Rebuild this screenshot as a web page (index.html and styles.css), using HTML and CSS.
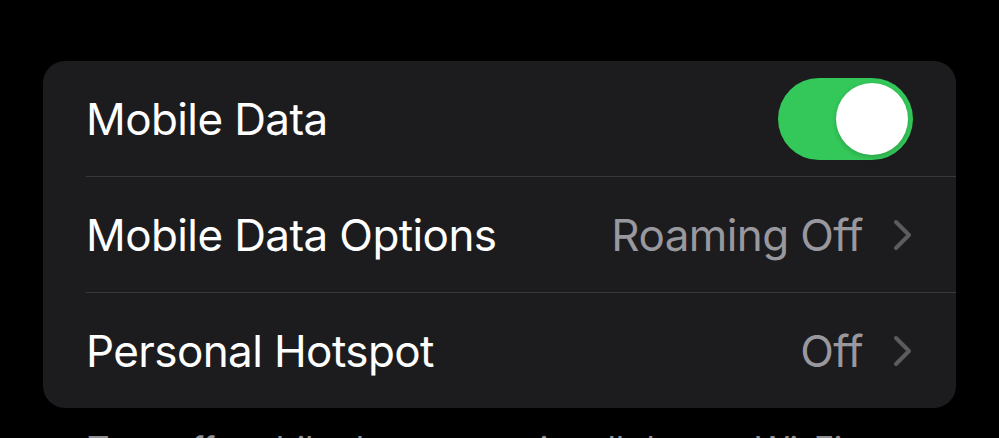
FILE: index.html
```html
<!DOCTYPE html>
<html lang="en">
<head>
<meta charset="utf-8">
<title>Mobile Data</title>
<link rel="stylesheet" href="styles.css">
</head>
<body>
<main class="page">
  <section class="card">
    <div class="row">
      <span class="label">Mobile Data</span>
      <span class="toggle on"><span class="knob"></span></span>
    </div>
    <div class="sep"></div>
    <div class="row">
      <span class="label">Mobile Data Options</span>
      <span class="detail">
        <span class="value">Roaming Off</span>
        <svg class="chev" width="19" height="32" viewBox="0 0 19 32"><polyline points="3,3 16,16 3,29" fill="none" stroke="currentColor" stroke-width="4" stroke-linecap="round" stroke-linejoin="round"/></svg>
      </span>
    </div>
    <div class="sep"></div>
    <div class="row">
      <span class="label">Personal Hotspot</span>
      <span class="detail">
        <span class="value">Off</span>
        <svg class="chev" width="19" height="32" viewBox="0 0 19 32"><polyline points="3,3 16,16 3,29" fill="none" stroke="currentColor" stroke-width="4" stroke-linecap="round" stroke-linejoin="round"/></svg>
      </span>
    </div>
  </section>
  <p class="footer">Turn off mobile data to restrict all data to Wi-Fi, including email, web browsing and push notifications.</p>
</main>
</body>
</html>
```
FILE: styles.css
```css
html, body {
  margin: 0;
  padding: 0;
  background: #000;
  height: 438px;
  overflow: hidden;
}
body {
  font-family: Inter, "Noto Sans", sans-serif;
  color: #fff;
}
.page {
  padding: 61px 43px 0 43px;
}
.card {
  background: #1c1c1e;
  border-radius: 22px;
  overflow: hidden;
}
.row {
  height: 115px;
  display: flex;
  align-items: center;
  justify-content: space-between;
  padding: 0 43px 0 43px;
}
.label {
  font-size: 44px;
  letter-spacing: -0.6px;
  color: #fff;
}
.sep {
  height: 1px;
  background: #38383a;
  margin-left: 43px;
}
.detail {
  display: flex;
  align-items: center;
  gap: 30px;
}
.value {
  font-size: 44px;
  letter-spacing: -0.6px;
  color: #98989e;
}
.chev {
  color: #5c5c60;
  display: block;
  margin-right: 1px;
}
.toggle {
  width: 135px;
  height: 82px;
  border-radius: 41px;
  background: #34c759;
  display: flex;
  align-items: center;
  justify-content: flex-end;
  padding: 0 5px;
  box-sizing: border-box;
}
.knob {
  width: 72px;
  height: 72px;
  border-radius: 50%;
  background: #fff;
  box-shadow: 0 2px 5px rgba(0,0,0,0.18);
}
.footer {
  margin: 20px 0 0 44px;
  font-size: 35px;
  letter-spacing: -0.3px;
  color: #8e8e93;
  line-height: 1.2;
}
```
